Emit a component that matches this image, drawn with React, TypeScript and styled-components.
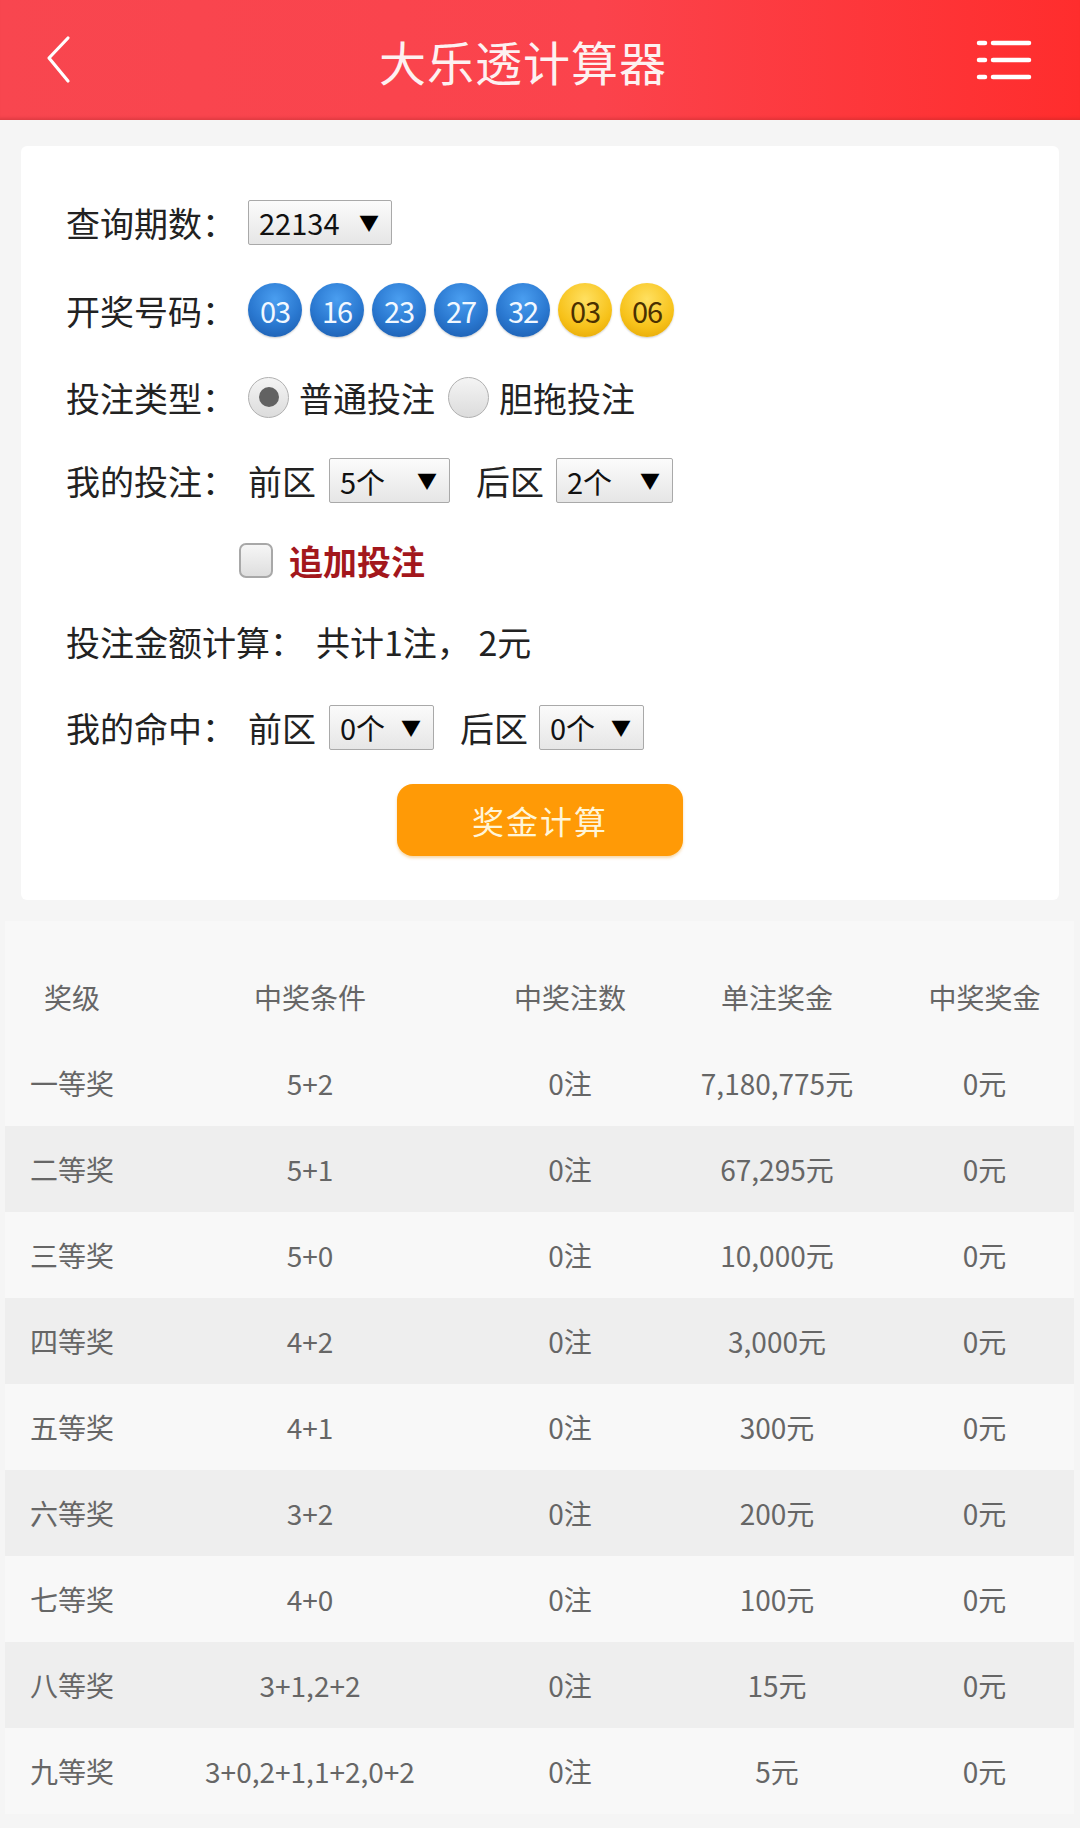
import React from "react"
import styled, { createGlobalStyle } from "styled-components"

const GlobalStyle = createGlobalStyle`
  html, body {
    margin: 0;
    padding: 0;
    background: #f5f5f5;
    font-family: "Noto Sans CJK SC", "Noto Sans", sans-serif;
  }
  * { box-sizing: border-box; }
`

const Page = styled.div`
  width: 1080px;
  min-height: 1828px;
  background: #f5f5f5;
`

const Header = styled.div`
  height: 120px;
  display: flex;
  align-items: center;
  justify-content: space-between;
  padding: 0 44px 0 44px;
  background: linear-gradient(90deg, #f8464f 0%, #fb434c 55%, #ff2d2d 100%);
  box-shadow: inset 0 -4px 3px -2px rgba(150, 30, 30, 0.25);
`

const IconBtn = styled.div`
  width: 60px;
  height: 60px;
  display: flex;
  align-items: center;
`

const Title = styled.h1`
  margin: 0 34px 0 0;
  font-size: 47px;
  font-weight: 400;
  color: #fdf1f1;
  letter-spacing: 1px;
`

const Card = styled.div`
  margin: 26px 21px 0;
  background: #fff;
  border-radius: 6px;
  padding: 32px 0 44px 45px;
`

const Row = styled.div<{ $h: number; $indent?: number }>`
  height: ${(p) => p.$h}px;
  display: flex;
  align-items: center;
  padding-left: ${(p) => p.$indent ?? 0}px;
  font-size: 34px;
  color: #222;
`

const Label = styled.span`
  min-width: 182px;
  padding-right: 12px;
  white-space: nowrap;
`

const Text = styled.span<{ $gap?: number }>`
  margin-right: ${(p) => p.$gap ?? 0}px;
  white-space: pre;
`

const Select = styled.div<{ $w: number }>`
  width: ${(p) => p.$w}px;
  height: 45px;
  display: flex;
  align-items: center;
  justify-content: space-between;
  padding: 0 12px 0 10px;
  border: 1px solid #a9a9a9;
  border-radius: 2px;
  background: linear-gradient(#fbfbfb, #e6e6e6);
  font-size: 29px;
  color: #111;
  margin-right: 26px;
`

const Arrow = styled.span`
  font-size: 20px;
  color: #000;
`

const Balls = styled.div`
  display: flex;
  gap: 8px;
`

const Ball = styled.div<{ $kind: "front" | "back" }>`
  width: 54px;
  height: 54px;
  border-radius: 50%;
  display: flex;
  align-items: center;
  justify-content: center;
  font-size: 29px;
  letter-spacing: -1px;
  color: ${(p) => (p.$kind === "front" ? "#f2f8ff" : "#4a3000")};
  background: ${(p) =>
    p.$kind === "front"
      ? "radial-gradient(circle at 50% 30%, #4a9ef0 0%, #2a78d0 55%, #1a58a8 100%)"
      : "radial-gradient(circle at 50% 30%, #ffe060 0%, #f7c21a 60%, #e0a000 100%)"};
  box-shadow: 0 1px 2px rgba(0, 0, 0, 0.2);
`

const Radio = styled.div<{ $checked?: boolean }>`
  width: 41px;
  height: 41px;
  border-radius: 50%;
  border: 1px solid #b0b0b0;
  background: linear-gradient(#f4f4f4, #dcdcdc);
  display: flex;
  align-items: center;
  justify-content: center;
  margin-right: 10px;
  &::after {
    content: "";
    display: ${(p) => (p.$checked ? "block" : "none")};
    width: 20px;
    height: 20px;
    border-radius: 50%;
    background: #626262;
  }
`

const Checkbox = styled.div`
  width: 34px;
  height: 35px;
  border-radius: 7px;
  border: 2px solid #a8a8a8;
  background: linear-gradient(#f6f6f6, #dedede);
  margin-right: 16px;
`

const Extra = styled.span`
  font-weight: 700;
  color: #a3171c;
`

const ButtonRow = styled.div`
  display: flex;
  justify-content: center;
  margin-top: 13px;
  padding-right: 45px;
`

const CalcButton = styled.button`
  width: 286px;
  height: 72px;
  border: none;
  border-radius: 16px;
  background: #ff9a06;
  color: #fff5d8;
  font-family: inherit;
  font-size: 32px;
  letter-spacing: 2px;
  box-shadow: 0 2px 3px rgba(230, 140, 0, 0.35);
`

const Table = styled.div`
  margin: 21px 6px 0 5px;
  padding-top: 33px;
  background: #f8f8f8;
`

const TRow = styled.div<{ $striped?: boolean }>`
  height: 86px;
  display: grid;
  grid-template-columns: 134px 342px 178px 236px 179px;
  align-items: center;
  background: ${(p) => (p.$striped ? "#eeeeee" : "transparent")};
  font-size: 28px;
  color: #666;
`

const Cell = styled.div`
  text-align: center;
  white-space: nowrap;
`

const prizes = [
  ["一等奖", "5+2", "0注", "7,180,775元", "0元"],
  ["二等奖", "5+1", "0注", "67,295元", "0元"],
  ["三等奖", "5+0", "0注", "10,000元", "0元"],
  ["四等奖", "4+2", "0注", "3,000元", "0元"],
  ["五等奖", "4+1", "0注", "300元", "0元"],
  ["六等奖", "3+2", "0注", "200元", "0元"],
  ["七等奖", "4+0", "0注", "100元", "0元"],
  ["八等奖", "3+1,2+2", "0注", "15元", "0元"],
  ["九等奖", "3+0,2+1,1+2,0+2", "0注", "5元", "0元"],
]

const BackIcon = () => (
  <svg width="30" height="50" viewBox="0 0 30 50">
    <polyline points="24,3 5,23 24,46" fill="none" stroke="#fff" strokeWidth="3.2" strokeLinecap="round" strokeLinejoin="round" />
  </svg>
)

const MenuIcon = () => (
  <svg width="56" height="44" viewBox="0 0 56 44">
    {[5, 22, 39].map((y) => (
      <g key={y} stroke="#fff" strokeWidth="4.5" strokeLinecap="round">
        <line x1="3" y1={y} x2="9" y2={y} />
        <line x1="17" y1={y} x2="53" y2={y} />
      </g>
    ))}
  </svg>
)

export default function App() {
  return (
    <Page>
      <GlobalStyle />
      <Header>
        <IconBtn>
          <BackIcon />
        </IconBtn>
        <Title>大乐透计算器</Title>
        <IconBtn>
          <MenuIcon />
        </IconBtn>
      </Header>

      <Card>
        <Row $h={88}>
          <Label>查询期数：</Label>
          <Select $w={144}>
            22134<Arrow>▼</Arrow>
          </Select>
        </Row>
        <Row $h={88}>
          <Label>开奖号码：</Label>
          <Balls>
            {["03", "16", "23", "27", "32"].map((n, i) => (
              <Ball key={i} $kind="front">{n}</Ball>
            ))}
            {["03", "06"].map((n, i) => (
              <Ball key={"b" + i} $kind="back">{n}</Ball>
            ))}
          </Balls>
        </Row>
        <Row $h={86}>
          <Label>投注类型：</Label>
          <Radio $checked />
          <Text $gap={13}>普通投注</Text>
          <Radio />
          <Text>胆拖投注</Text>
        </Row>
        <Row $h={81}>
          <Label>我的投注：</Label>
          <Text $gap={13}>前区</Text>
          <Select $w={121}>
            5个<Arrow>▼</Arrow>
          </Select>
          <Text $gap={12}>后区</Text>
          <Select $w={117}>
            2个<Arrow>▼</Arrow>
          </Select>
        </Row>
        <Row $h={79} $indent={173}>
          <Checkbox />
          <Extra>追加投注</Extra>
        </Row>
        <Row $h={83}>
          <Label>投注金额计算：</Label>
          <Text>共计1注， 2元</Text>
        </Row>
        <Row $h={88}>
          <Label>我的命中：</Label>
          <Text $gap={13}>前区</Text>
          <Select $w={105}>
            0个<Arrow>▼</Arrow>
          </Select>
          <Text $gap={11}>后区</Text>
          <Select $w={105}>
            0个<Arrow>▼</Arrow>
          </Select>
        </Row>
        <ButtonRow>
          <CalcButton>奖金计算</CalcButton>
        </ButtonRow>
      </Card>

      <Table>
        <TRow>
          {["奖级", "中奖条件", "中奖注数", "单注奖金", "中奖奖金"].map((h) => (
            <Cell key={h}>{h}</Cell>
          ))}
        </TRow>
        {prizes.map((r, i) => (
          <TRow key={r[0]} $striped={i % 2 === 1}>
            {r.map((c, j) => (
              <Cell key={j}>{c}</Cell>
            ))}
          </TRow>
        ))}
      </Table>
    </Page>
  )
}
